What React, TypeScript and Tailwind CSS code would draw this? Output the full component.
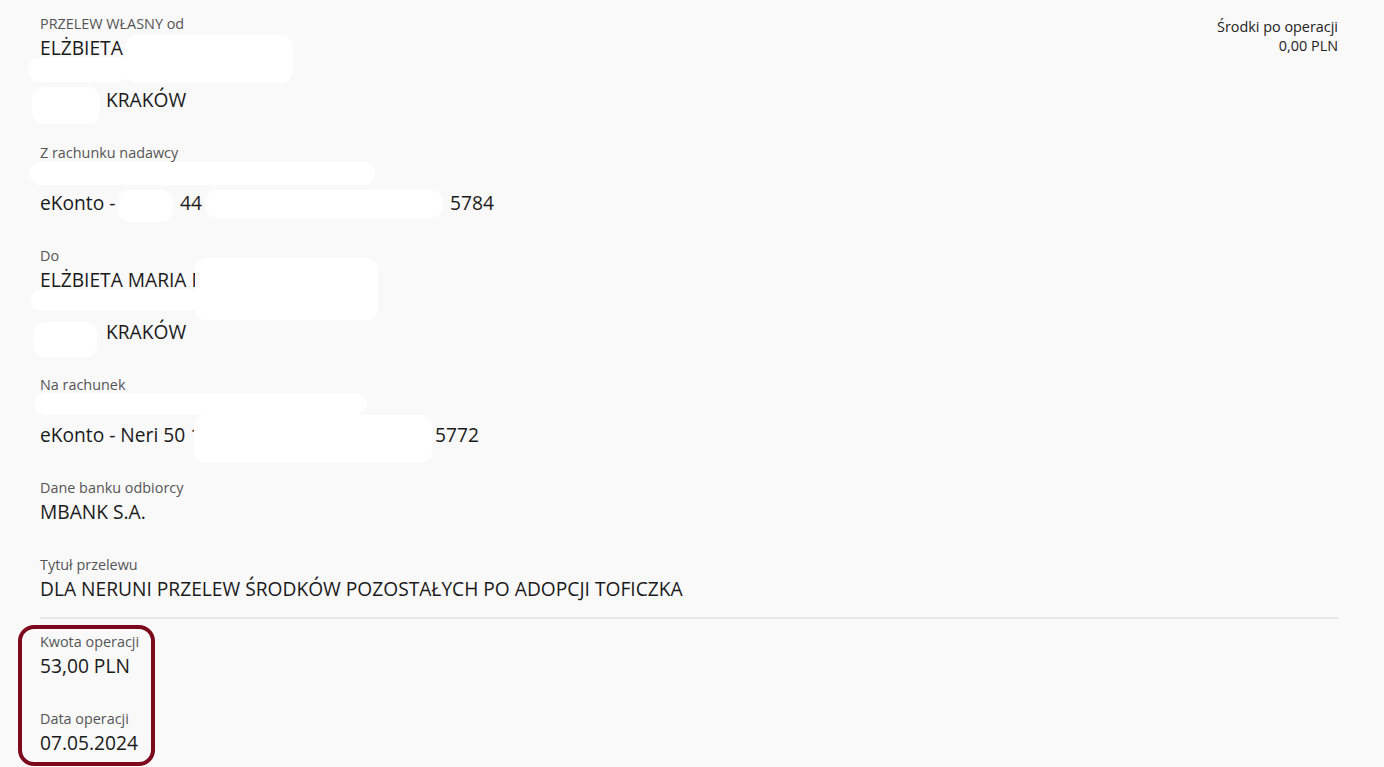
import React from "react";

type Blob = { l: number; t: number; w: number; h: number };

// white redaction patches over the private bits
const blobs: Blob[] = [
  { l: 28, t: 57, w: 102, h: 25 },
  { l: 125, t: 35, w: 168, h: 48 },
  { l: 32, t: 87, w: 68, h: 37 },
  { l: 30, t: 162, w: 345, h: 23 },
  { l: 118, t: 190, w: 55, h: 32 },
  { l: 205, t: 190, w: 238, h: 28 },
  { l: 30, t: 290, w: 170, h: 21 },
  { l: 195, t: 258, w: 183, h: 62 },
  { l: 33, t: 322, w: 64, h: 35 },
  { l: 35, t: 393, w: 332, h: 22 },
  { l: 194, t: 415, w: 238, h: 48 },
];

function Label({ children }: { children: React.ReactNode }) {
  return <div className="text-[14.4px] leading-[20px] text-[#555555]">{children}</div>;
}

function Value({ children }: { children?: React.ReactNode }) {
  return (
    <div className="text-[19.2px] leading-[26px] pt-px -mb-px text-[#1a1a1a] whitespace-pre flex">
      {children ?? "\u00a0"}
    </div>
  );
}

export default function App() {
  return (
    <div className="relative min-h-screen w-full bg-[#f9f9f9] font-['Open_Sans',sans-serif] pl-[40px] pr-[46px] pt-[14px] overflow-hidden">
      <div className="flex justify-between">
        <div>
          <Label>PRZELEW WŁASNY od</Label>
          <Value>ELŻBIETA K</Value>
          <Value />
          <Value>
            <span className="w-[66px]" />
            <span>KRAKÓW</span>
          </Value>
        </div>
        <div className="text-right text-[14.4px] leading-[19px] text-[#222222] pt-[3px]">
          <div>Środki po operacji</div>
          <div>0,00 PLN</div>
        </div>
      </div>

      <div className="mt-[31px]">
        <Label>Z rachunku nadawcy</Label>
        <Value />
        <Value>
          <span className="w-[140px]">eKonto -</span>
          <span className="w-[270px]">44</span>
          <span>5784</span>
        </Value>
      </div>

      <div className="mt-[31px]">
        <Label>Do</Label>
        <Value>ELŻBIETA MARIA N</Value>
        <Value />
        <Value>
          <span className="w-[66px]" />
          <span>KRAKÓW</span>
        </Value>
      </div>

      <div className="mt-[31px]">
        <Label>Na rachunek</Label>
        <Value>-</Value>
        <Value>
          <span className="w-[395px]">eKonto - Neri 50 1</span>
          <span>5772</span>
        </Value>
      </div>

      <div className="mt-[31px]">
        <Label>Dane banku odbiorcy</Label>
        <Value>MBANK S.A.</Value>
      </div>

      <div className="mt-[31px]">
        <Label>Tytuł przelewu</Label>
        <Value>DLA NERUNI PRZELEW ŚRODKÓW POZOSTAŁYCH PO ADOPCJI TOFICZKA</Value>
      </div>

      <div className="mt-[16px] h-[2px] bg-[#e6e6e6]" />

      <div className="mt-[6px] -ml-[22px] w-[137px] border-4 border-[#7c0a1c] rounded-[16px] pl-[18px] pt-[3px] pb-[7px]">
        <Label>Kwota operacji</Label>
        <Value>53,00 PLN</Value>
        <div className="mt-[31px]">
          <Label>Data operacji</Label>
          <Value>07.05.2024</Value>
        </div>
      </div>

      {blobs.map((b, i) => (
        <div
          key={i}
          className="absolute bg-white rounded-[12px]"
          style={{ left: b.l, top: b.t, width: b.w, height: b.h }}
        />
      ))}
    </div>
  );
}
